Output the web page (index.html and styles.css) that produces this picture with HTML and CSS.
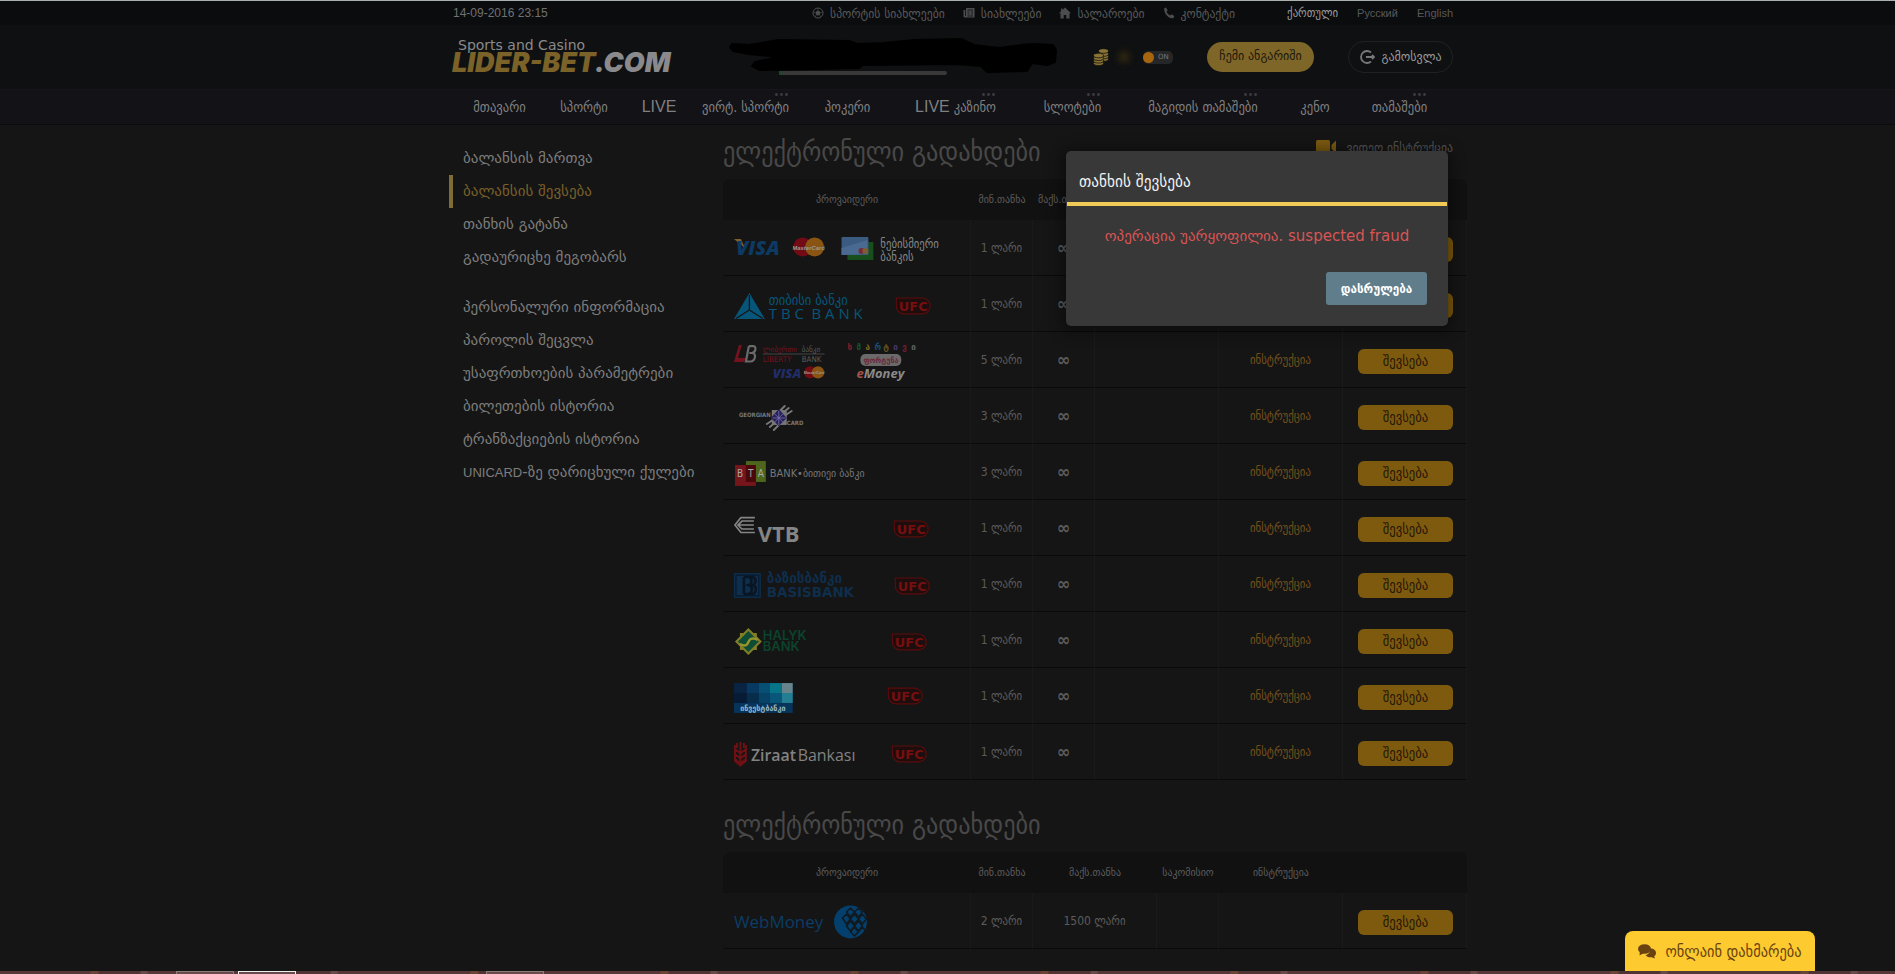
FILE: index.html
```
<!DOCTYPE html>
<html lang="ka">
<head>
<meta charset="utf-8">
<title>Lider-Bet</title>
<link rel="stylesheet" href="styles.css">
</head>
<body>
<svg class="defs" aria-hidden="true">
  <symbol id="ufc" viewBox="0 0 36 18"><path d="M1 1H27a8 8 0 0 1 0 16H9a8 8 0 0 1-8-8Z" fill="#1e0d0d" stroke="#5c0c0c" stroke-width="1.200"/><text x="18" y="14" text-anchor="middle" class="t-ufc">UFC</text></symbol>
  <symbol id="mc" viewBox="0 0 32 20"><circle cx="10" cy="10" r="9.500" fill="#720b15"/><circle cx="22" cy="10" r="9.500" fill="#8a5413"/><text x="16" y="13" text-anchor="middle" class="t-mc">MasterCard</text></symbol>
</svg>

<div class="topbar">
  <div class="wrap topbar-in">
    <time class="clock">14-09-2016 23:15</time>
    <nav class="toplinks">
      <a href="#"><svg width="12" height="12" viewBox="0 0 12 12"><circle cx="6" cy="6" r="5" fill="none" stroke="#4c4d4e"/><path d="M6 3.6 8.3 5.2 7.4 8H4.6L3.7 5.2ZM6 1v2M1 6l2-.8M11 6l-2-.8M3 10l1.200-1.800M9 10 7.800 8.200" fill="#4c4d4e" stroke="#4c4d4e" stroke-width=".6"/></svg>სპორტის სიახლეები</a>
      <a href="#"><svg width="12" height="12" viewBox="0 0 12 12"><path d="M3 1h8.500v9.500H1.500L.5 9.500V3H3Z" fill="#4c4d4e"/><path d="M4.500 3h5.500M4.500 5h2M8 5h2M4.500 7h2M8 7h2M4.500 9h5.500M2.500 3v6" stroke="#0b0c0e" stroke-width=".8"/></svg>სიახლეები</a>
      <a href="#"><svg width="12" height="12" viewBox="0 0 12 12"><path d="M6 .5 12 6.200H10.500V11.500H7.300V8H4.700v3.500H1.500V6.200H0L2 4.200V1.500h1.500v1.400Z" fill="#4c4d4e"/></svg>სალაროები</a>
      <a href="#"><svg width="12" height="12" viewBox="0 0 12 12"><path d="M1.200 1.200 3 .5 4.700 3.500 3.500 4.700Q4.500 7.200 7.200 8.500L8.500 7.300l2.800 1.700-.8 2Q8.500 12 5.500 10 1 6.800 1.200 1.200Z" fill="#4c4d4e"/></svg>კონტაქტი</a>
    </nav>
    <nav class="langs">
      <a href="#" class="on">ქართული</a><a href="#">Русский</a><a href="#">English</a>
    </nav>
  </div>
</div>

<header class="header">
  <div class="wrap header-in">
    <a class="logo" href="#"><span class="tag">Sports and Casino</span><span class="name"><b>LIDER-BET</b>.COM</span></a>
    <svg class="user" width="328" height="38" viewBox="0 0 328 38">
      <rect x="50" y="33" width="168" height="4" rx="2" fill="#3a3939"/><rect x="50" y="33" width="2" height="4" fill="#174a22"/>
      <path d="M3 6 20 7 50 2 120 3 128 6 155 5 185 2 232 1 245 7 270 10 292 7 305 6 324 7 327 12 326 24 318 27 303 25 298 33 258 34 252 28 228 26 134 27 130 30 30 32 23 28 26 24 50 19 20 16 4 13 1 9Z" fill="#000" stroke="#000" stroke-width="2" stroke-linejoin="round"/>
    </svg>
    <div class="bonus">
      <svg width="16" height="18" viewBox="0 0 16 18"><g fill="#8a7333" stroke="#0f1011" stroke-width=".8"><ellipse cx="10.500" cy="11" rx="5" ry="2.300"/><ellipse cx="10.500" cy="8.500" rx="5" ry="2.300"/><ellipse cx="10.500" cy="6" rx="5" ry="2.300"/><ellipse cx="10.500" cy="3" rx="5" ry="2.300"/><ellipse cx="5.500" cy="15.200" rx="5" ry="2.300"/><ellipse cx="5.500" cy="12.700" rx="5" ry="2.300"/><ellipse cx="5.500" cy="10.200" rx="5" ry="2.300"/><ellipse cx="5.500" cy="7.500" rx="5" ry="2.300"/></g></svg>
      <span class="glow"></span>
      <button class="toggle" type="button" aria-pressed="true"><i></i>ON</button>
    </div>
    <a class="account" href="#">ჩემი ანგარიში</a>
    <a class="logout" href="#"><svg width="16" height="16" viewBox="0 0 16 16"><path d="M12 3.500A6 6 0 1 0 12 12.500M7 8h8M13 6l2 2-2 2" fill="none" stroke="#77787a" stroke-width="1.800"/></svg>გამოსვლა</a>
  </div>
</header>

<nav class="nav">
  <div class="wrap nav-in">
    <a href="#">მთავარი</a>
    <a href="#">სპორტი</a>
    <a href="#" class="lat">LIVE</a>
    <a href="#" class="more">ვირტ. სპორტი</a>
    <a href="#">პოკერი</a>
    <a href="#" class="more"><span class="lat">LIVE</span> კაზინო</a>
    <a href="#" class="more">სლოტები</a>
    <a href="#" class="more">მაგიდის თამაშები</a>
    <a href="#">კენო</a>
    <a href="#" class="more">თამაშები</a>
  </div>
</nav>

<div class="wrap page">
  <aside class="side">
    <a href="#">ბალანსის მართვა</a>
    <a href="#" class="on">ბალანსის შევსება</a>
    <a href="#">თანხის გატანა</a>
    <a href="#">გადაურიცხე მეგობარს</a>
    <a href="#" class="gap">პერსონალური ინფორმაცია</a>
    <a href="#">პაროლის შეცვლა</a>
    <a href="#">უსაფრთხოების პარამეტრები</a>
    <a href="#">ბილეთების ისტორია</a>
    <a href="#">ტრანზაქციების ისტორია</a>
    <a href="#"><span class="lat">UNICARD</span>-ზე დარიცხული ქულები</a>
  </aside>

  <main class="main">
    <div class="title">
      <h1>ელექტრონული გადახდები</h1>
      <a class="video" href="#"><svg width="20" height="14" viewBox="0 0 20 14"><rect width="14" height="14" rx="1.500" fill="#7c5a10"/><path d="M15.500 5 20 .5v13L15.500 9Z" fill="#7c5a10"/></svg>ვიდეო ინსტრუქცია</a>
    </div>
    <table class="pay">
      <colgroup><col class="c4"><col class="c1"><col class="c1"><col class="c2"><col class="c2"><col class="c2"></colgroup>
      <thead><tr><th>პროვაიდერი</th><th>მინ.თანხა</th><th>მაქს.თანხა</th><th>საკომისიო</th><th>ინსტრუქცია</th><th></th></tr></thead>
      <tbody>
      <tr><td><svg class="brand" viewBox="0 0 248 55">
        <path d="M11 19h7l4 9Z" fill="#80602a"/><text x="13" y="35" class="t-visa">VISA</text>
        <use href="#mc" x="70" y="17" width="32" height="20"/>
        <rect x="125" y="22" width="26" height="18" fill="#17501c"/><rect x="119" y="17" width="27" height="18" rx="1" fill="#3c5b80"/><path d="M119 28 145 20v14l-26 1Z" fill="#4a6a92"/><circle cx="139" cy="31" r="3" fill="#762b38"/><circle cx="143" cy="31" r="3" fill="#7d5d35"/>
        <text x="158" y="28" class="t-any">ნებისმიერი</text><text x="158" y="41" class="t-any">ბანკის</text></svg></td>
        <td>1 ლარი</td><td class="inf">∞</td><td></td><td><a href="#">ინსტრუქცია</a></td><td><button type="button">შევსება</button></td></tr>
      <tr><td><svg class="brand" viewBox="0 0 248 55">
        <path d="M26.500 17 42 43H11Z" fill="#07567a"/><path d="M26.500 19v15M26.500 34 13 42.500M26.500 34 40 42.500" stroke="#151515" stroke-width="1.300"/>
        <text x="46" y="29" class="t-tbcg">თიბისი ბანკი</text><text x="46" y="43" class="t-tbc">T B C&#160; B A N K</text>
        <use href="#ufc" x="173" y="21" width="36" height="18"/></svg></td>
        <td>1 ლარი</td><td class="inf">∞</td><td></td><td><a href="#">ინსტრუქცია</a></td><td><button type="button">შევსება</button></td></tr>
      <tr><td><svg class="brand" viewBox="0 0 248 55">
        <path d="M16 13h3L15 26h8l-2 4H11Z" fill="#75121d"/><path d="M26 14h4q3 0 2.500 3.500-.5 3-3.500 3.500 4 .5 3 4.500-1 4-4.500 4h-4.500L26 14M26.500 21h3" fill="none" stroke="#6a6a6a" stroke-width="2.200"/>
        <text x="40" y="20" class="t-lb red">ლიბერთი</text><text x="79" y="20" class="t-lb">ბანკი</text><path d="M40 22h62" stroke="#5b5b5b" stroke-width=".7"/><text x="40" y="30" class="t-lb red">LIBERTY</text><text x="79" y="30" class="t-lb">BANK</text>
        <text x="50" y="46" class="t-visa sm">VISA</text><use href="#mc" x="81" y="34" width="21" height="13"/>
        <g class="t-smart"><text x="125" y="18" fill="#84202c">ს</text><text x="134" y="18" fill="#17502b">მ</text><text x="143" y="18" fill="#806020">ა</text><text x="152" y="18" fill="#174d80">რ</text><text x="161" y="18" fill="#655623">ტ</text><text x="171" y="18" fill="#4d376b">ი</text><text x="180" y="18" fill="#7d1a30">ვ</text><text x="189" y="18" fill="#626262">ი</text></g>
        <rect x="138" y="22" width="41" height="12" rx="5" fill="#6a6a6a"/><text x="141" y="31" class="t-fort">ფორტუნა</text>
        <text x="134" y="46" class="t-em"><tspan fill="#a45248">e</tspan>Money</text></svg></td>
        <td>5 ლარი</td><td class="inf">∞</td><td></td><td><a href="#">ინსტრუქცია</a></td><td><button type="button">შევსება</button></td></tr>
      <tr><td><svg class="brand" viewBox="0 0 248 55">
        <text x="16" y="29" class="t-gc">GEORGIAN</text><text x="64" y="37" class="t-gc">CARD</text>
        <rect x="49" y="22" width="15" height="15" fill="#777" /><g stroke="#777" stroke-width="2" stroke-linecap="round"><path d="m57 23 5-5M60 25l6-5M63 27l6-4M44 36l6-4M47 39l6-5M51 42l5-5"/></g><path d="m56 21 8 9-8 8-8-8Z" fill="#27205c"/><path d="m52 26 8 8M60 26l-8 8M56 23v14M50 30h13" stroke="#7a76a8" stroke-width=".8"/></svg></td>
        <td>3 ლარი</td><td class="inf">∞</td><td></td><td><a href="#">ინსტრუქცია</a></td><td><button type="button">შევსება</button></td></tr>
      <tr><td><svg class="brand" viewBox="0 0 248 55">
        <rect x="23" y="17" width="20" height="21" fill="#4e661c"/><rect x="12" y="21" width="21" height="21" fill="#74161b"/><rect x="23" y="21" width="10" height="17" fill="#4b080c"/>
        <g class="t-bta"><text x="14" y="33">B</text><text x="25" y="33">T</text><text x="35" y="33">A</text></g><text x="47" y="33" class="t-bank">BANK•ბითიეი ბანკი</text></svg></td>
        <td>3 ლარი</td><td class="inf">∞</td><td></td><td><a href="#">ინსტრუქცია</a></td><td><button type="button">შევსება</button></td></tr>
      <tr><td><svg class="brand" viewBox="0 0 248 55">
        <path d="M32 17.500H18L12 25l6 7.500H32M31 21H19l-4 4 4 4H31M31 25H16" fill="none" stroke="#858585" stroke-width="1.700"/><text x="35" y="42" class="t-vtb">VTB</text>
        <use href="#ufc" x="171" y="20" width="36" height="18"/></svg></td>
        <td>1 ლარი</td><td class="inf">∞</td><td></td><td><a href="#">ინსტრუქცია</a></td><td><button type="button">შევსება</button></td></tr>
      <tr><td><svg class="brand" viewBox="0 0 248 55">
        <rect x="11" y="17" width="27" height="25" fill="#0e2e4c"/><path d="M13 19h23v21H13Z" fill="none" stroke="#07192b" stroke-width="1.200"/><path d="M21 21h5c4 1 3 7 0 8 4 1 4 9-1 9h-4M27 21h3c4 1 3 7 0 8 4 1 4 9-1 9h-3M21 21v17" fill="none" stroke="#081522" stroke-width="2.500"/>
        <text x="44" y="27" class="t-basis">ბაზისბანკი</text><text x="44" y="41" class="t-basis">BASISBANK</text>
        <use href="#ufc" x="172" y="21" width="36" height="18"/></svg></td>
        <td>1 ლარი</td><td class="inf">∞</td><td></td><td><a href="#">ინსტრუქცია</a></td><td><button type="button">შევსება</button></td></tr>
      <tr><td><svg class="brand" viewBox="0 0 248 55">
        <rect x="17" y="21" width="17" height="17" fill="#807e27"/><path d="m25.500 16 13.500 13.500L25.500 43 12 29.500Z" fill="#807e27"/><path d="m25.500 19 10.500 10.500L25.500 40 15 29.500Z" fill="#0e4c35"/><path d="M17 32c7 4 8-1 9-3s4-4 9-1" fill="none" stroke="#99952b" stroke-width="2.500"/>
        <text x="40" y="28" class="t-halyk">HALYK</text><text x="40" y="39" class="t-halyk">BANK</text>
        <use href="#ufc" x="169" y="21" width="36" height="18"/></svg></td>
        <td>1 ლარი</td><td class="inf">∞</td><td></td><td><a href="#">ინსტრუქცია</a></td><td><button type="button">შევსება</button></td></tr>
      <tr><td><svg class="brand" viewBox="0 0 248 55">
        <rect x="11" y="15" width="59" height="30" fill="#06345a"/><path d="M11 15h13v10H11Z" fill="#092442"/><path d="M24 15h12v10H24Z" fill="#083a61"/><path d="M36 15h11v10H36Z" fill="#085073"/><path d="M47 15h12v10H47Z" fill="#087487"/><path d="M59 15h11v10H59Z" fill="#67848b"/><path d="M11 25h13v10H11Z" fill="#071a36"/><path d="M24 25h12v10H24Z" fill="#082d4b"/><path d="M36 25h11v10H36Z" fill="#064366"/><path d="M47 25h12v10H47Z" fill="#08577a"/><path d="M59 25h11v10H59Z" fill="#237e91"/>
        <text x="40" y="43" text-anchor="middle" class="t-inv">ინვესტბანკი</text>
        <use href="#ufc" x="165" y="19" width="36" height="18"/></svg></td>
        <td>1 ლარი</td><td class="inf">∞</td><td></td><td><a href="#">ინსტრუქცია</a></td><td><button type="button">შევსება</button></td></tr>
      <tr><td><svg class="brand" viewBox="0 0 248 55">
        <path d="M12 21v16l5.500 4.500L23 37V21M17.500 18v22M12 25l5.500 4.500L23 25M12 30l5.500 4.500L23 30M12 35l5.500 4.500L23 35M14 19v5M21 19v5" fill="none" stroke="#6e1014" stroke-width="1.900"/>
        <text x="28" y="37" class="t-zir"><tspan class="b">Ziraat</tspan></text><text x="75" y="37" class="t-zir">Bankası</text>
        <use href="#ufc" x="169" y="21" width="36" height="18"/></svg></td>
        <td>1 ლარი</td><td class="inf">∞</td><td></td><td><a href="#">ინსტრუქცია</a></td><td><button type="button">შევსება</button></td></tr>
      </tbody>
    </table>

    <div class="title second"><h2>ელექტრონული გადახდები</h2></div>
    <table class="pay">
      <colgroup><col class="c4"><col class="c1"><col class="c2"><col class="c1"><col class="c2"><col class="c2"></colgroup>
      <thead><tr><th>პროვაიდერი</th><th>მინ.თანხა</th><th>მაქს.თანხა</th><th>საკომისიო</th><th>ინსტრუქცია</th><th></th></tr></thead>
      <tbody>
      <tr><td><svg class="brand" viewBox="0 0 248 55">
        <text x="11" y="35" class="t-wm">WebMoney</text><circle cx="128" cy="29" r="16.500" fill="#04406d"/>
        <g fill="none" stroke="#111a20" stroke-width="1.600"><path d="m124 19 4-4 4 4-4 5ZM132 19l4-4 4 4-4 5ZM120 25l4-4 4 5-4 5ZM128 26l4-5 4 5-4 5ZM136 26l4-5 4 5-4 5ZM124 33l4-5 4 5-4 5ZM132 33l4-5 4 5-4 5ZM128 39l4-5 4 5-4 4ZM136 39l4-5 4 5"/></g></svg></td>
        <td>2 ლარი</td><td>1500 ლარი</td><td></td><td></td><td><button type="button">შევსება</button></td></tr>
      </tbody>
    </table>
  </main>

  <section class="modal" role="dialog" aria-labelledby="mt">
    <h3 id="mt">თანხის შევსება</h3>
    <p>ოპერაცია უარყოფილია. suspected fraud</p>
    <div class="acts"><button type="button">დასრულება</button></div>
  </section>
</div>

<button class="chat" type="button"><svg width="18" height="15" viewBox="0 0 18 15"><path d="M12 4.500c4 0 6 2 6 4.500 0 1.500-.8 2.600-1.800 3.300L17 14.500 13.500 13.300c-3 .2-5-.8-5.800-2.300 3-.6 4.800-3 4.300-6.500Z" fill="#6a4311"/><ellipse cx="6.500" cy="5" rx="6.500" ry="4.800" fill="#6a4311"/><path d="M2 7 1.500 11.500 6 9Z" fill="#6a4311"/></svg>ონლაინ დახმარება</button>
<div class="taskbar"><i></i><i class="act"></i><i class="far"></i></div>
</body>
</html>
```
FILE: styles.css
```
* { box-sizing: border-box; }
body {
  margin: 0;
  min-height: 100vh;
  display: flex;
  flex-direction: column;
  background: #151515;
  color: #8a8a8a;
  font: 13px "DejaVu Sans Condensed", "DejaVu Sans", sans-serif;
  border-top: 1px solid #a9b0ae;
}
a { color: inherit; text-decoration: none; }
button { font: inherit; border: 0; padding: 0; cursor: pointer; }
.defs { position: absolute; width: 0; height: 0; }
.lat { font-family: "Liberation Sans", Arial, sans-serif; }
.wrap { width: 100%; max-width: 1039px; margin: 0 auto; padding-left: 21px; }

.topbar { background: #0b0c0e; }
.topbar-in { display: flex; align-items: center; height: 24px; padding-right: 14px; padding-left: 25px; color: #58595a; font-size: 13px; }
.clock { font: 12px "Liberation Sans", Arial, sans-serif; color: #707172; }
.toplinks { display: flex; gap: 18px; margin-left: auto; }
.toplinks a { display: flex; align-items: center; gap: 6px; }
.langs { display: flex; align-items: center; gap: 19px; margin-left: 52px; font: 11px "Liberation Sans", "DejaVu Sans Condensed", sans-serif; }
.langs .on { color: #9a9a9a; font: 12px "DejaVu Sans Condensed", sans-serif; }

.header { background: #0f1011; border-bottom: 1px solid #16161b; }
.header-in { display: flex; align-items: center; height: 64px; padding-right: 14px; padding-left: 24px; }
.logo { display: flex; flex-direction: column; width: 277px; color: #8a8a8c; }
.tag { padding-left: 6px; font: 14px/12px "DejaVu Sans", sans-serif; }
.name { font: italic 900 27px/24px Inter, "Liberation Sans", sans-serif; }
.name b { color: #7a6228; font-weight: 900; }
.user { margin-right: 36px; }
.bonus { display: flex; align-items: center; gap: 9px; }
.glow { width: 12px; height: 12px; border-radius: 50%; background: #2e2612; filter: blur(3px); }
.toggle { display: flex; align-items: center; gap: 4px; width: 30px; height: 13px; margin-left: 4px; border-radius: 5px; background: #252628; color: #777; font: 7px/13px "DejaVu Sans", sans-serif; }
.toggle i { width: 11px; height: 11px; border-radius: 50%; background: #a8650e; }
.account { margin-left: auto; width: 107px; height: 30px; border-radius: 15px; background: #7d6627; color: #1e180c; font: 12px/29px "DejaVu Sans", sans-serif; text-align: center; }
.logout { display: flex; align-items: center; justify-content: center; gap: 6px; width: 105px; height: 32px; margin-left: 34px; border: 1px solid #202123; border-radius: 16px; color: #9a9a9a; font: 12px "DejaVu Sans", sans-serif; }

.nav { background: #121217; border-bottom: 1px solid #0b0b0c; }
.nav-in { display: grid; grid-template-columns: 85fr 84fr 66fr 107fr 97fr 119fr 115fr 146fr 78fr 91fr; padding-left: 29px; padding-right: 22px; height: 34px; font-size: 14px; line-height: 34px; text-align: center; white-space: nowrap; color: #808080; }
.nav .lat { font-size: 16px; }
.nav-in > a { position: relative; justify-self: center; }
.more::after { content: ""; position: absolute; right: 0; top: 3px; width: 15px; height: 3px; background: radial-gradient(circle, #38383c 1px, transparent 2px) 0 0 / 5px 3px; }

.page { position: relative; display: flex; flex: 1; }
.side { width: 274px; padding-top: 17px; font: 15px "DejaVu Sans", sans-serif; color: #7d7d7d; white-space: nowrap; }
.side a { display: block; height: 33px; line-height: 33px; padding-left: 10px; border-left: 4px solid transparent; }
.side .on { color: #79602a; border-color: #7f6d36; }
.side .gap { margin-top: 17px; }
.side .lat { font-size: 13px; }

.main { flex: 1; min-width: 0; padding-bottom: 21px; }
.title { display: flex; justify-content: space-between; height: 54px; padding-right: 14px; }
.title.second { height: 52px; margin-top: 20px; }
h1, h2 { margin: 0; font-size: 27px; font-weight: 400; line-height: 54px; color: #484848; white-space: nowrap; }
h2 { line-height: 50px; }
.video { display: flex; align-items: center; gap: 10px; height: 44px; font-size: 13px; color: #555; }

.pay { width: 100%; table-layout: fixed; border-collapse: separate; border-spacing: 0; color: #5c5c5c; font-size: 12px; text-align: center; }
.c4 { width: 33.33%; } .c1 { width: 8.33%; } .c2 { width: 16.67%; }
.pay th { height: 41px; padding: 0; background: #111; font-size: 11px; font-weight: 400; line-height: 41px; white-space: nowrap; }
.pay th:first-child { border-top-left-radius: 8px; }
.pay th:last-child { border-top-right-radius: 8px; }
.pay td { height: 56px; padding: 0; border-bottom: 1px solid #0a0a0a; border-right: 1px solid #1a1a1a; white-space: nowrap; }
.pay td:last-child { padding-left: 2px; }
.pay td a { color: #75521c; font-size: 12px; }
.pay .inf { font-size: 18px; font-weight: 700; }
.pay button { width: 95px; height: 25px; margin-top: 4px; border-radius: 6px; background: #7e5a0e; color: #231705; font-size: 14px; line-height: 23px; }
.brand { display: block; width: 100%; height: 55px; }

.modal { position: absolute; top: 26px; right: 19px; width: 382px; padding: 0 0 21px; border-radius: 5px; background: #383838; box-shadow: 0 2px 14px 4px rgba(0, 0, 0, .4); }
.modal h3 { margin: 0 1px; height: 55px; padding-left: 12px; border-bottom: 4px solid #f2cb57; color: #f2f2f2; font-size: 17px; font-weight: 400; line-height: 60px; }
.modal p { margin: 0; height: 66px; color: #d95555; font: 15px/60px "DejaVu Sans", sans-serif; text-align: center; }
.acts { display: flex; justify-content: flex-end; padding-right: 21px; }
.acts button { width: 101px; height: 33px; border-radius: 3px; background: #607d8b; color: #fff; font-size: 13px; font-weight: 700; line-height: 31px; }

.chat { position: absolute; right: 80px; bottom: 3px; display: flex; align-items: center; justify-content: center; gap: 9px; width: 190px; height: 40px; border-radius: 8px 8px 0 0; background: #fdca2f; color: #6a4311; font-size: 16px; white-space: nowrap; }
.taskbar { display: flex; flex-shrink: 0; gap: 4px; height: 3px; padding-left: 176px; background: repeating-linear-gradient(90deg, #573838 0 90px, #6a4435 91px 98px, #503333 99px 140px, #684b47 141px 147px, #573838 148px 190px); }
.taskbar i { width: 58px; border: 1px solid #8b7c7c; border-bottom: 0; background: #694a4a; }
.taskbar .act { border-color: #eee; }
.taskbar .far { margin-left: 186px; }

.brand text, symbol text { font-family: "DejaVu Sans Condensed", "DejaVu Sans", sans-serif; }
.t-ufc { font: 700 13px "DejaVu Sans", sans-serif; fill: #760f0f; }
.brand .t-mc, .t-mc { font: italic 700 6px "Liberation Sans", sans-serif; fill: #999; }
.brand .t-visa { font: italic 800 20px "Open Sans", sans-serif; fill: #0d3a62; }
.brand .t-visa.sm { font-size: 13px; fill: #212d68; }
.t-any { font-size: 12px; fill: #858585; }
.t-tbcg { font-size: 14px; fill: #07567a; }
.brand .t-tbc { font: 15px "Open Sans", sans-serif; fill: #07567a; }
.brand .t-lb { font-size: 8px; fill: #5b5b5b; }
.brand .t-lb.red { fill: #75121d; }
.t-smart { font-size: 9px; font-weight: 700; }
.t-fort { font-size: 8px; font-weight: 700; fill: #6b2b35; }
.brand .t-em { font: italic 700 13px "Open Sans", sans-serif; fill: #8a8a8a; }
.brand .t-gc { font: 700 6px "DejaVu Sans Condensed", sans-serif; fill: #777; }
.t-bta { font-size: 10px; fill: #aaa; }
.brand .t-bank { font-size: 11px; fill: #777; }
.brand .t-vtb { font: 700 22px "Open Sans", sans-serif; fill: #858585; }
.t-basis { font-size: 15px; font-weight: 700; fill: #0e2e4c; }
.brand .t-halyk { font: 600 13px Inter, sans-serif; fill: #0c432c; }
.t-inv { font-size: 8px; font-weight: 700; fill: #9ab4bf; }
.brand .t-zir { font: 16px "Open Sans", sans-serif; fill: #828282; }
.t-zir .b { font-weight: 600; }
.brand .t-wm { font: 17px "Open Sans", sans-serif; fill: #0b3d66; }
```
